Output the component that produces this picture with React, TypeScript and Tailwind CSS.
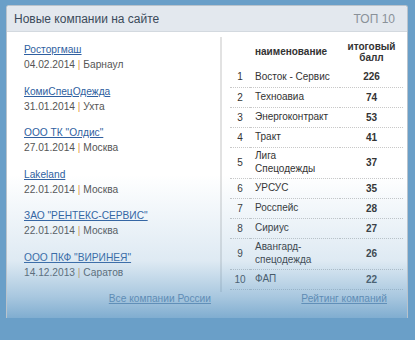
const companies = [
  { name: 'Росторгмаш', date: '04.02.2014', city: 'Барнаул' },
  { name: 'КомиСпецОдежда', date: '31.01.2014', city: 'Ухта' },
  { name: 'ООО ТК "Олдис"', date: '27.01.2014', city: 'Москва' },
  { name: 'Lakeland', date: '22.01.2014', city: 'Москва' },
  { name: 'ЗАО "РЕНТЕКС-СЕРВИС"', date: '22.01.2014', city: 'Москва' },
  { name: 'ООО ПКФ "ВИРИНЕЯ"', date: '14.12.2013', city: 'Саратов' },
];

const rating = [
  { n: 1, name: ['Восток - Сервис'], score: 226 },
  { n: 2, name: ['Техноавиа'], score: 74 },
  { n: 3, name: ['Энергоконтракт'], score: 53 },
  { n: 4, name: ['Тракт'], score: 41 },
  { n: 5, name: ['Лига', 'Спецодежды'], score: 37 },
  { n: 6, name: ['УРСУС'], score: 35 },
  { n: 7, name: ['Росспейс'], score: 28 },
  { n: 8, name: ['Сириус'], score: 27 },
  { n: 9, name: ['Авангард-', 'спецодежда'], score: 26 },
  { n: 10, name: ['ФАП'], score: 22 },
];

export default function App() {
  return (
    <div className="w-[415px] h-[340px] bg-[#6a9fc8] pt-[5px] pl-[6px] overflow-hidden font-['Liberation_Sans',Arial,sans-serif]">
      <div className="relative w-[402px] h-[313px] bg-white border border-b-0 border-[#b9c3cc] rounded-t-[3px] overflow-hidden">
        <div className="h-[26px] bg-[#e3e8ee] border-b border-[#d3d9df] flex items-center justify-between pl-[7px] pr-[12px]">
          <span className="text-[12px] text-[#3b4a5a]">Новые компании на сайте</span>
          <span className="text-[12px] text-[#8a9199]">ТОП 10</span>
        </div>

        <div className="flex pt-[5px]">
          <div className="w-[213px] pl-[17px] pt-[5px]">
            {companies.map((c) => (
              <div key={c.name} className="h-[41.6px] text-[10.2px] leading-[15px]">
                <a href="#" className="text-[#2f5f9f] underline">
                  {c.name}
                </a>
                <div className="text-[#555]">
                  {c.date} <span className="text-[#e39b3c]">|</span> {c.city}
                </div>
              </div>
            ))}
          </div>

          <div className="border-l-2 border-[#e2e2e2] pl-[8px] h-[255px]">
            <table className="w-[173px] text-[10px] text-[#333] border-collapse">
              <thead>
                <tr className="h-[30px] font-bold leading-[11.5px]">
                  <th className="w-[20px]"></th>
                  <th className="w-[90px] text-left pl-[5px] font-bold">наименование</th>
                  <th className="text-center font-bold">
                    итоговый
                    <br />
                    балл
                  </th>
                </tr>
              </thead>
              <tbody>
                {rating.map((r) => (
                  <tr
                    key={r.n}
                    className={`${r.name.length > 1 ? 'h-[31px]' : 'h-[20px]'} border-b border-dotted border-[#c8c8c8]`}
                  >
                    <td className="text-center">{r.n}</td>
                    <td className="pl-[5px] leading-[12.5px]">
                      {r.name.map((line, i) => (
                        <div key={i}>{line}</div>
                      ))}
                    </td>
                    <td className="text-center font-bold">{r.score}</td>
                  </tr>
                ))}
              </tbody>
            </table>
          </div>
        </div>

        <div className="flex text-[10.2px] leading-[14px]">
          <div className="w-[213px] text-right pr-[9px]">
            <a href="#" className="text-[#4d6f98] underline">
              Все компании России
            </a>
          </div>
          <div className="flex-1 text-right pr-[20px]">
            <a href="#" className="text-[#4d6f98] underline">
              Рейтинг компаний
            </a>
          </div>
        </div>

        <div className="pointer-events-none absolute left-0 right-0 bottom-0 h-[143px] bg-[linear-gradient(to_bottom,rgba(106,159,200,0)_0%,rgba(106,159,200,0.22)_60%,rgba(106,159,200,0.58)_85%,rgba(106,159,200,0.85)_100%)]"></div>
      </div>
    </div>
  );
}
